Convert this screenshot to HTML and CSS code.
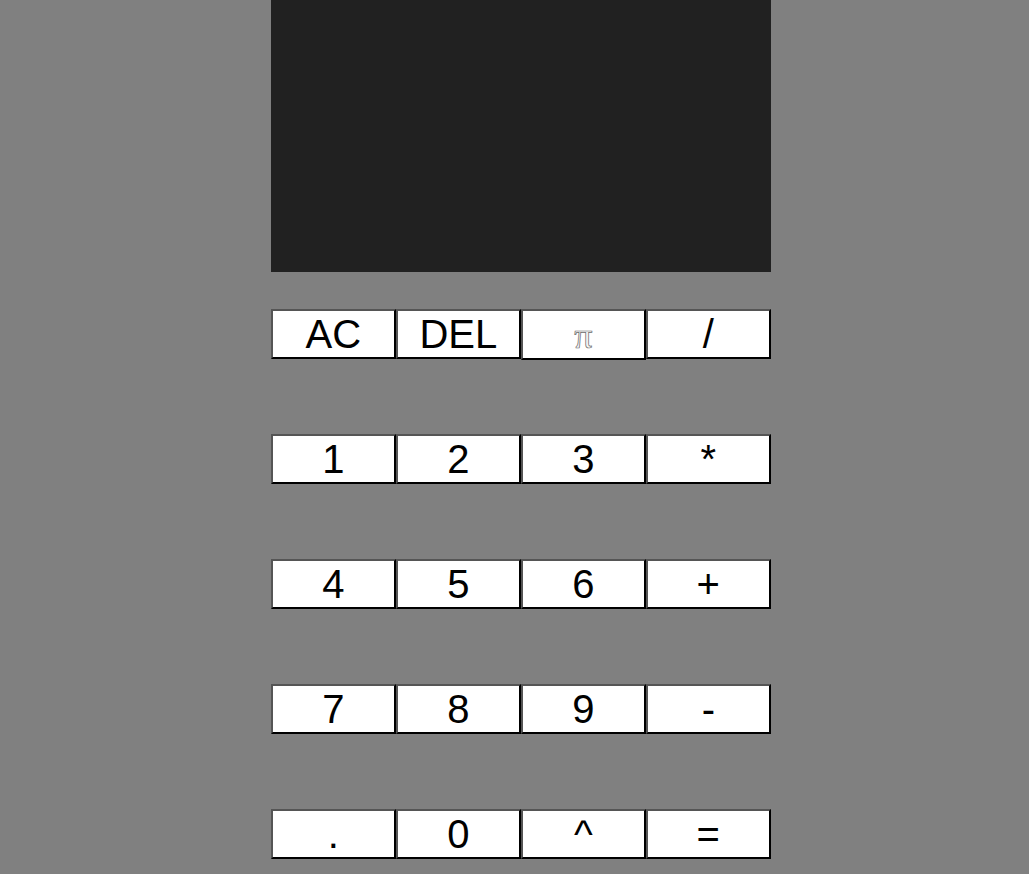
FILE: index.html
```html
<!DOCTYPE html>
<html>
<head>
<meta charset="utf-8">
<link rel="stylesheet" href="styles.css">
</head>
<body>
<div class="calc">
  <div class="display"></div>
  <div class="keys">
    <button class="key">AC</button>
    <button class="key">DEL</button>
    <button class="key key-pi"><span class="pi">&pi;</span></button>
    <button class="key">/</button>
    <button class="key">1</button>
    <button class="key">2</button>
    <button class="key">3</button>
    <button class="key">*</button>
    <button class="key">4</button>
    <button class="key">5</button>
    <button class="key">6</button>
    <button class="key">+</button>
    <button class="key">7</button>
    <button class="key">8</button>
    <button class="key">9</button>
    <button class="key">-</button>
    <button class="key">.</button>
    <button class="key">0</button>
    <button class="key">^</button>
    <button class="key">=</button>
  </div>
</div>
</body>
</html>
```
FILE: styles.css
```css
html, body {
  margin: 0;
  padding: 0;
  background: #808080;
  overflow: hidden;
}
body {
  padding-left: 271px;
  font-family: "Liberation Sans", Arial, sans-serif;
}
.calc {
  width: 500px;
}
.display {
  height: 272px;
  background: #212121;
}
.keys {
  display: grid;
  grid-template-columns: repeat(4, 125px);
  grid-auto-rows: 50px;
  row-gap: 75px;
  padding-top: 37px;
  align-items: start;
}
.key {
  box-sizing: border-box;
  width: 124.6px;
  height: 50px;
  margin: 0;
  padding: 0;
  background: #fff;
  color: #000;
  font-family: "Liberation Sans", Arial, sans-serif;
  font-size: 40px;
  line-height: 46px;
  border-style: solid;
  border-width: 2px;
  border-color: #555 #000 #000 #555;
  display: flex;
  align-items: flex-start;
  justify-content: center;
}
.key-pi {
  height: 51px;
}
.pi {
  font-family: "Liberation Serif", "DejaVu Serif", serif;
  font-size: 36px;
  line-height: 36px;
  margin-top: 7px;
  color: #f4f4f4;
  -webkit-text-stroke: 0.7px #6a6a6a;
}
```
